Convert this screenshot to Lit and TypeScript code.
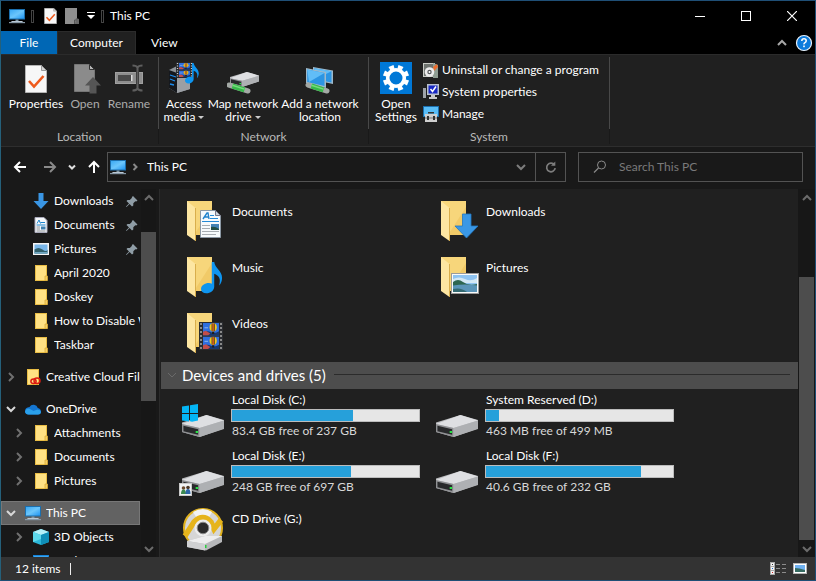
import { LitElement, html, svg, css, nothing } from "lit";
import type { TemplateResult } from "lit";
import { customElement, property } from "lit/decorators.js";
import { classMap } from "lit/directives/class-map.js";

type Icon = TemplateResult;

/* ---------- drawing helpers ---------- */

const draw = (w: number, h: number, body: unknown): Icon =>
  html`<svg class="art" width=${w} height=${h} viewBox="0 0 ${w} ${h}" aria-hidden="true">${body}</svg>`;

const chevron = (dir: "up" | "down" | "right", color: string, width = 2, reach = 4): Icon => {
  const r = reach;
  const points = {
    up: `${6 - r},${6 + r / 2} 6,${6 - r / 2} ${6 + r},${6 + r / 2}`,
    down: `${6 - r},${6 - r / 2} 6,${6 + r / 2} ${6 + r},${6 - r / 2}`,
    right: `${6 - r / 2},${6 - r} ${6 + r / 2},6 ${6 - r / 2},${6 + r}`,
  }[dir];
  return draw(12, 12, svg`<polyline points=${points} fill="none" stroke=${color} stroke-width=${width}/>`);
};

const pcIcon = draw(16, 16, svg`
  <defs><linearGradient id="pc" x2="1" y2="1"><stop stop-color="#3ba9f4"/><stop offset=".5" stop-color="#6cc6fb"/><stop offset="1" stop-color="#2196f3"/></linearGradient></defs>
  <rect x="0" y="1" width="16" height="10.5" fill="#1b6fae"/>
  <rect x="1" y="2" width="14" height="8.5" fill="url(#pc)"/>
  <path d="M6.500 11.500h3v1.500h-3z" fill="#7f97a8"/><path d="M3 13h10l1.500 1.200h-13z" fill="#b9c7d3"/><path d="M0 14h16v1.200h-16z" fill="#8798a6"/>`);

const sheet = (w: number, h: number): Icon => html`<svg class="art" width=${w} height=${h} viewBox="0 0 22 28" aria-hidden="true">
  <path d="M.5.5h16l5 5v22H.5z" fill="#f7f7f7" stroke="#b5b5b5"/><path d="M16.500.5v5h5z" fill="#d4d4d4" stroke="#999"/>
  <path d="M4 16l5 5.500 9.500-10.500" fill="none" stroke="#ee5a1c" stroke-width="2.600"/></svg>`;

const greySheet = draw(14, 16, svg`<path d="M0 0h12v11h2v5h-14z" fill="#8f8f8f"/><path d="M11 10l3 1v5h-4z" fill="#666"/><path d="M9.500 16v-4h2" fill="none" stroke="#555"/>`);

const openIcon = draw(32, 32, svg`
  <path d="M5.500 2.500h15l5 5v22h-20z" fill="#8b8b8b" stroke="#767676"/><path d="M20.500 2.500v5h5z" fill="#b5b5b5" stroke="#333"/>
  <path d="M24 15l8 8.500h-4.500v8h-7v-8H16z" fill="#555"/>`);

const renameIcon = draw(32, 32, svg`
  <rect x="2.500" y="10.500" width="27" height="11" fill="#8e8e8e" stroke="#a0a0a0"/>
  <rect x="5" y="13" width="13" height="6" fill="#4a4a4a"/><rect x="18" y="13" width="1.500" height="6" fill="#ddd"/>
  <path d="M23 8h3v16h-3z" fill="#202020"/><path d="M24.500 4v24M19.500 3.500q4 0 5 2q1-2 5-2M19.500 28.500q4 0 5-2q1 2 5 2" fill="none" stroke="#5e5e5e" stroke-width="2"/>`);

const note = (x: number, y: number, s: number) => svg`<g transform="translate(${x} ${y}) scale(${s})">
  <path d="M11 0h2.500c.5 6 8 9 8 16 0 3-1 6-3 8 2-7 0-10-5-12v13c0 4-4 7-8 7-3.500 0-5.500-2-5.500-4.500 0-3.500 4-6 8-6 1.200 0 2.200.2 3 .7z" fill="#0e95f0"/></g>`;

const filmFrame = svg`
  <rect width="22" height="13" fill="#2f6fe0"/><path d="M0 9.500q6-2 11 0t11-1v4.500h-22z" fill="#16386f"/>
  <path d="M0 9l4-1 6 3-3 2h-7z" fill="#c24d4a"/><path d="M2 5h5" stroke="#9cc4f5"/>
  <ellipse cx="14" cy="4.500" rx="5" ry="4.300" fill="#f4c81f"/>
  <path d="M12.500.5v8M15.500.5v8" stroke="#2b2416" stroke-width="1"/><path d="M14 .5v8" stroke="#d3301f" stroke-width="1.400"/><path d="M12.500 9h3v2.500h-3z" fill="#1b1b1b"/>`;

const accessIcon = draw(32, 32, svg`
  <path d="M1 8l8-4 13 2v21l-13 4-8-5z" fill="#8d9297"/><path d="M1 8l8 3v20l-8-5z" fill="#15181d"/><path d="M9 11l13-3v19l-13 4z" fill="#9b9fa4"/>
  <path d="M2 13l6 2M2 17l5 2M2 22l4 1" stroke="#1d8df0" stroke-width="1.300"/>
  <rect x="8" y="0" width="17" height="16" fill="#25282d"/>
  <svg x="11" y="1" width="11" height="6.500" viewBox="0 0 22 13">${filmFrame}</svg><svg x="11" y="8.500" width="11" height="6.500" viewBox="0 0 22 13">${filmFrame}</svg>
  <path d="M9.500 1v14M23.500 1v14" stroke="#c9c9c9" stroke-width="1.300" stroke-dasharray="1 1.500"/>
  ${note(17, 1, 0.64)}`);

const driveBody = svg`
  <path d="M0 7.500L25 0l18 5v8.500L18 22 0 17z" fill="#b9babd"/>
  <path d="M0 9L25 0l18 5.500L18 13z" fill="#dedfe2"/>
  <path d="M0 9l18 4v9L0 17z" fill="#8f9093"/><path d="M1.500 10.700l15 3.500v5.500l-15-3.500z" fill="#28292b"/>
  <rect x="14" y="16" width="2.500" height="2" fill="#29e045"/><path d="M18 13L43 5.500v8.500L18 22z" fill="#aeb0b3"/>`;

const pipe = svg`
  <path d="M2 0l19 6" stroke="#a3a9a5" stroke-width="5" stroke-linecap="round"/><path d="M5.500 1l12 3.900" stroke="#37b84a" stroke-width="5"/><path d="M5.500 .2l12 3.900" stroke="#74dd7c" stroke-width="1.500"/>`;

const mapIcon = draw(32, 32, svg`
  <svg x="3" y="10" width="29" height="15" viewBox="0 0 43 22" preserveAspectRatio="none">${driveBody}</svg><g transform="translate(0 23)">${pipe}</g>`);

const screen = svg`<path d="M0 0l20 4v16L0 15z" fill="#9fb9ca"/><path d="M1.200 1.500l17.300 3.600v13L1.200 14z" fill="#2c95e3"/><path d="M1.200 1.500l17.300 3.600L3 14z" fill="#61bdf7"/>`;
const addIcon = draw(32, 32, svg`
  <g transform="translate(9 5) scale(1 .85)">${screen}</g><g transform="translate(2 6)">${screen}</g><g transform="translate(2 23)">${pipe}</g>`);

const gearIcon = draw(32, 32, svg`
  <rect width="32" height="32" fill="#0078d7"/>
  <g fill="#fff">${[0, 45, 90, 135, 180, 225, 270, 315].map((a) => svg`<path d="M13.300 3h5.400l-.7 6h-4z" transform="rotate(${a + 22.5} 16 16)"/>`)}</g>
  <circle cx="16" cy="16" r="8.300" fill="none" stroke="#fff" stroke-width="3.600"/>`);

const uninstallIcon = draw(16, 16, svg`
  <rect x="0" y="1" width="12" height="14" fill="#c9ccc6"/><rect x="1" y="2" width="9" height="12" fill="#6e736f"/>
  <path d="M10 1l5 2v13h-5z" fill="#8f9d92"/><path d="M10 5l4-3 1 3-4 4z" fill="#ec6c2d"/>
  <circle cx="6.500" cy="10" r="4.800" fill="#ececec"/><circle cx="6.500" cy="10" r="2.200" fill="#55575a"/><circle cx="6.500" cy="10" r="1" fill="#fff"/>`);

const sysPropIcon = draw(16, 16, svg`
  <rect x="0" y="4" width="3" height="10" fill="#9fa3a8"/><rect x="4" y="0" width="12" height="11" fill="#b9c0cd"/><rect x="5.500" y="1.500" width="9" height="8" fill="#1828c4"/>
  <path d="M7.500 5l2 2.500 3.500-5" fill="none" stroke="#fff" stroke-width="1.500"/><path d="M8 11h4v2h2v2h-8v-2h2z" fill="#c9c9c9"/>`);

const manageIcon = draw(16, 16, svg`
  <rect x="0" y="0" width="16" height="11" fill="#1b6fae"/><rect x="1" y="1" width="14" height="9" fill="#59bdf7"/>
  <path d="M5 7.500h6v-1.500h-6z" fill="#333"/><rect x="2" y="8" width="12" height="8" fill="#cfcfcf"/><rect x="2" y="11.500" width="12" height="1" fill="#777"/>
  <rect x="4" y="10" width="2" height="4" fill="#333"/><rect x="10" y="10" width="2" height="4" fill="#333"/>`);

const helpIcon = draw(18, 18, svg`<circle cx="9" cy="9" r="7.500" fill="#0c7bdc" stroke="#e8f2fb" stroke-width="1.200"/>
  <path d="M6.800 7q0-2.200 2.200-2.200t2.200 2q0 1.200-1.200 1.800t-1 1.700" fill="none" stroke="#fff" stroke-width="1.500"/><rect x="8.200" y="11.500" width="1.600" height="1.700" fill="#fff"/>`);

const arrow = (dir: "left" | "right" | "up", color: string): Icon =>
  draw(14, 14, svg`<path d="M13 7H2M7 2L2 7l5 5" fill="none" stroke=${color} stroke-width="2" transform="rotate(${{ left: 0, right: 180, up: 90 }[dir]} 7 7)"/>`);

const refreshIcon = draw(14, 14, svg`<path d="M10.500 5A4.300 4.300 0 1 0 11.200 8.200" fill="none" stroke="#7d7d7d" stroke-width="1.700"/><path d="M11.300 1.500v4.300H7z" fill="#7d7d7d"/>`);

const downloadMini = draw(16, 16, svg`<path d="M5.500 0h5v8h5L8 16 .5 8h5z" fill="#3a96e4"/>`);
const docMini = draw(16, 16, svg`
  <path d="M2 .5h9l3 3v12H2z" fill="#f5f8fa" stroke="#aab"/><path d="M4 6.500L6 3l1.500 3.500M7.500 5.500h4.500M3.500 8h9" stroke="#1d86cf" fill="none"/>
  <path d="M3.500 10h3.500M3.500 12h3.500M3.500 14h9" stroke="#8a8f94"/><rect x="8" y="9.500" width="4.500" height="3" fill="#3e7fae"/>`);
const picMini = draw(16, 16, svg`
  <rect x="0" y="2" width="16" height="12" fill="#f4f4f4"/><rect x="1.500" y="3.500" width="13" height="9" fill="#79b7ea"/>
  <path d="M1.500 8.500q4-3 8 0t5 0v4h-13z" fill="#32606b"/><path d="M1.500 11h13v1.500h-13z" fill="#6fa7c2"/>`);
const folderMini = draw(16, 16, svg`
  <rect x="2" y="0" width="12" height="16" fill="#e9bd45"/><rect x="3" y="1" width="10" height="14" fill="#ffe184"/><path d="M12 11h2.500v4.600H12z" fill="#f6cf62" stroke="#d9a937" stroke-width=".8"/>`);
const ccMini = draw(16, 16, svg`
  <rect x="2" y="0" width="12" height="16" fill="#e9bd45"/><rect x="3" y="1" width="10" height="14" fill="#ffe184"/>
  <ellipse cx="8.500" cy="12.300" rx="2.600" ry="2.300" fill="none" stroke="#dd1b12" stroke-width="1.500"/><ellipse cx="12" cy="11.700" rx="3" ry="2.700" fill="none" stroke="#dd1b12" stroke-width="1.500"/>`);
const cloudMini = draw(16, 16, svg`
  <path d="M4.500 6a4.500 4.500 0 0 1 8.300 1q3 .7 3.200 3.500 0 3-3 3h-9.500q-3.500-.3-3.500-3.500 0-3.500 4.500-4z" fill="#1476d2"/>
  <path d="M0 10.500q1.500-4 5-2.500l3.500 2 4-1.500q3 .2 3.500 2.500-.3 2.500-3 2.500h-9.500q-3-.2-3.500-3z" fill="#2aa0ea"/>`);
const cubeMini = draw(16, 16, svg`
  <path d="M8 0l8 3v10l-8 3-8-3V3z" fill="#2bb7d9"/><path d="M8 0l8 3-8 3-8-3z" fill="#b4f0f8"/><path d="M8 6l8-3v10l-8 3z" fill="#0f8fb8"/><path d="M0 3l8 3v4L0 13z" fill="#5cd9ec"/>`);
const desktopMini = draw(16, 16, svg`<rect x="0" y="2" width="16" height="11" fill="#1683d8"/><rect x="1" y="3" width="14" height="9" fill="#3aa6f2"/>`);
const pinIcon = draw(12, 12, svg`<path d="M7 1l4.500 4.500-1.200 1-1-.3-2 2v2.300L6 11.500 3.600 9 .5 12 0 11.500l3-3.100L.5 6l1-1h2.300l2-2L6 2z" fill="#8f9da6"/>`);

const folderShape = svg`
  <path d="M8 4h25v34H8z" fill="#f1ca68"/><path d="M8 4h25v6L15 38h-7z" fill="#f7d67b"/>
  <path d="M8 4l8.500 7v33L8 38z" fill="#fde6a2"/><path d="M16.500 11v33" stroke="#d9ae4c"/>`;

const bigFolder = (badge: unknown): Icon => draw(48, 48, svg`${folderShape}${badge}`);

const docBadge = svg`
  <path d="M21.500 13.500h15l5 5v22h-20z" fill="#f7fafc" stroke="#8c98a4"/><path d="M36.500 13.500v5h5z" fill="#cfd6dc" stroke="#778"/>
  <path d="M24 22l4-6h1l1 6M25.500 20h4" fill="none" stroke="#2283cc" stroke-width="1.400"/>
  <path d="M31 18.500h4M31 21.500h8M23 24.500h17" stroke="#258ad6"/>
  <path d="M23 28.500h8M23 31.500h8M23 34.500h17M23 37.500h14" stroke="#a8adb2"/><rect x="32" y="27" width="8" height="6" fill="#4382b4"/><path d="M32 30q4-1 8 2v1h-8z" fill="#234f45"/>`;
const downBadge = svg`<path d="M29.500 17h8.500v12h7L33.500 41 22 29h7.500z" fill="#3a98e6" stroke="#2277c0" stroke-width=".8"/>`;
const picBadge = svg`
  <rect x="18.500" y="20.500" width="27" height="20" fill="#fafafa" stroke="#9b9b9b"/><rect x="20" y="22" width="24" height="17" fill="#8fc4f2"/>
  <path d="M20 26q6-3 12 0t12-1v5h-24z" fill="#d3e8f5"/><path d="M20 29q5-4 10 0t14 2v2h-24z" fill="#2f6650"/><path d="M20 32.500q12-2 24 0V39h-24z" fill="#5b95b8"/><path d="M20 36q8-2 14 3h-14z" fill="#346a72"/>`;
const videoBadge = svg`
  <rect x="20" y="13" width="24" height="28" fill="#2b2d31"/>
  <svg x="24" y="14" width="16" height="12.500" viewBox="0 0 22 13" preserveAspectRatio="none">${filmFrame}</svg><svg x="24" y="27.500" width="16" height="12.500" viewBox="0 0 22 13" preserveAspectRatio="none">${filmFrame}</svg>
  <path d="M22 14v27M42 14v27" stroke="#8a8a8a" stroke-width="2" stroke-dasharray="2 2"/>`;

const driveIcon = (extra: unknown = nothing): Icon =>
  draw(48, 48, svg`<svg x="3" y="23" width="42" height="22" viewBox="0 0 43 22" preserveAspectRatio="none">${driveBody}</svg>${extra}`);
const winFlag = svg`<path d="M3 14.500l7-1v7.500h-7zM11 13.300l8-1.300v9h-8zM3 22h7v7.500l-7-1zM11 22h8v6.500l-6 1.200-2-.5z" fill="#04b5f5"/>`;
const sharedBadge = svg`
  <rect x=".5" y="35.500" width="12" height="12" fill="#f1f3f4" stroke="#c9c9c9"/><circle cx="4.500" cy="40" r="1.800" fill="#6b4a2e"/><circle cx="9" cy="39.500" r="1.800" fill="#4d3826"/>
  <path d="M2 46q0-4.500 2.500-4.500T7 46z" fill="#3d8a50"/><path d="M6.500 46q0-5 2.500-5t2.500 5z" fill="#2d66a8"/>`;
const cdIcon = draw(48, 48, svg`
  <circle cx="24" cy="24" r="19" fill="#d6d6d6" stroke="#e0b11d" stroke-width="2"/>
  <path d="M24 24L14 8q10-6 19 0z" fill="#f3f3f3"/>
  <path d="M6 32L15 18Q24 9 32 18L35 25L42 16" fill="none" stroke="#e6b41b" stroke-width="5.500"/>
  <circle cx="24" cy="24" r="8.500" fill="#ececec"/><circle cx="24" cy="24" r="5.800" fill="#2b2b2b" stroke="#888"/>
  <path d="M8 37l18-5 17 0v6L27 46.500 8 43z" fill="#b7b8ba"/><path d="M8 37l18-5 17 0-17 8z" fill="#ededee"/><path d="M8 37l18 3v6.500L8 43z" fill="#cfd0d2"/><rect x="26" y="41" width="1.500" height="3" fill="#28d03f"/>`);

const detailsIcon = draw(18, 14, svg`
  <rect x=".5" y=".5" width="4" height="12" fill="#f2f2f2" stroke="#aaa"/><path d="M0 4.500h5M0 8.500h5" stroke="#aaa"/>
  <rect x="2" y="2" width="1" height="1" fill="#333"/><rect x="2" y="6" width="1" height="1" fill="#1b6fd0"/><rect x="2" y="10" width="1" height="1" fill="#c22"/>
  <path d="M6 2.500h4M12 2.500h4M6 6.500h4M12 6.500h4M6 10.500h4M12 10.500h4" stroke="#8c8c8c"/>`);
const tilesIcon = draw(14, 12, svg`
  <rect x=".5" y=".5" width="13" height="10" fill="#fff" stroke="#b5b5b5"/><rect x="2" y="2" width="10" height="7" fill="#6fb1f2"/><path d="M2 5q4 0 10 2v2h-10z" fill="#366b62"/>`);

/* ---------- shared styles ---------- */

const base = css`
  * { box-sizing: border-box; }
  button { all: unset; box-sizing: border-box; cursor: default; }
  ul { list-style: none; margin: 0; padding: 0; }
  .art { display: block; flex: none; }
`;

/* ---------- navigation tree ---------- */

interface NavNode { text: string; icon: Icon; level: 1 | 2; arrow?: "right" | "down"; pin?: boolean; gap?: boolean; selected?: boolean; }

const navNodes: NavNode[] = [
  { text: "Downloads", icon: downloadMini, level: 2, pin: true },
  { text: "Documents", icon: docMini, level: 2, pin: true },
  { text: "Pictures", icon: picMini, level: 2, pin: true },
  { text: "April 2020", icon: folderMini, level: 2 },
  { text: "Doskey", icon: folderMini, level: 2 },
  { text: "How to Disable Windows", icon: folderMini, level: 2 },
  { text: "Taskbar", icon: folderMini, level: 2 },
  { text: "Creative Cloud Files", icon: ccMini, level: 1, arrow: "right", gap: true },
  { text: "OneDrive", icon: cloudMini, level: 1, arrow: "down", gap: true },
  { text: "Attachments", icon: folderMini, level: 2, arrow: "right" },
  { text: "Documents", icon: folderMini, level: 2, arrow: "right" },
  { text: "Pictures", icon: folderMini, level: 2, arrow: "right" },
  { text: "This PC", icon: pcIcon, level: 1, arrow: "down", gap: true, selected: true },
  { text: "3D Objects", icon: cubeMini, level: 2, arrow: "right" },
  { text: "Desktop", icon: desktopMini, level: 2 },
];

@customElement("nav-tree")
export class NavTree extends LitElement {
  static styles = [base, css`
    :host { display: block; overflow: hidden; padding-right: 1px; }
    .row { display: flex; align-items: center; width: 100%; height: 24px; padding-left: 4px; white-space: nowrap; overflow: hidden; }
    .row.two { padding-left: 12px; }
    .row.selected { background: #626262; box-shadow: inset 0 0 0 1px #777; }
    .gap { margin-top: 8px; }
    .twist { flex: none; width: 12px; margin-right: 8px; }
    .icon { flex: none; width: 16px; margin-right: 5px; }
    .text { flex: 1; min-width: 0; overflow: hidden; }
    .pin { flex: none; margin-right: 2px; }
  `];

  render() {
    return html`<ul>${navNodes.map((n) => html`
      <li class=${classMap({ gap: !!n.gap })}>
        <button class=${classMap({ row: true, two: n.level === 2, selected: !!n.selected })}>
          <span class="twist">${n.arrow ? chevron(n.arrow, n.arrow === "down" ? "#d8d8d8" : "#707070") : nothing}</span>
          <span class="icon">${n.icon}</span>
          <span class="text">${n.text}</span>
          ${n.pin ? html`<span class="pin">${pinIcon}</span>` : nothing}
        </button>
      </li>`)}</ul>`;
  }
}

/* ---------- scroll bar ---------- */

@customElement("scroll-rail")
export class ScrollRail extends LitElement {
  @property({ type: Number }) before = 0;
  @property({ type: Number }) thumb = 0;
  @property({ type: Number }) after = 0;
  static styles = [base, css`
    :host { display: flex; flex-direction: column; align-items: stretch; background: #171717; }
    button { display: grid; place-items: center; height: 17px; flex: none; }
    .thumb { background: #4d4d4d; }
  `];
  render() {
    return html`
      <button aria-label="Scroll up">${chevron("up", "#6b6b6b")}</button>
      <div style="flex:${this.before} 0 0"></div>
      <div class="thumb" style="flex:${this.thumb} 0 0"></div>
      <div style="flex:${this.after} 0 0"></div>
      <button aria-label="Scroll down">${chevron("down", "#6b6b6b")}</button>`;
  }
}

/* ---------- ribbon ---------- */

interface BigCmd { lines: string[]; icon: Icon; size: string; drop?: boolean; off?: boolean; }

@customElement("ribbon-bar")
export class RibbonBar extends LitElement {
  static styles = [base, css`
    :host { display: flex; padding: 2px 0 2px; background: #202020; border-top: 1px solid #2b2b2b; border-bottom: 1px solid #2e2e2e; color: #fff; }
    .group { display: flex; flex-direction: column; }
    .cmds { display: flex; height: 72px; padding: 5px 6px 0 1px; border-right: 1px solid #484848; }
    .first .cmds { padding: 5px 6px 0 7px; }
    .last { min-width: 241px; }
    .last .cmds { padding: 5px 9px 0 3px; }
    .name { height: 15px; line-height: 15px; text-align: center; color: #b8b8b8; border-right: 1px solid #191919; }
    .big { display: flex; flex-direction: column; align-items: center; line-height: 13px; white-space: nowrap; }
    .big .label { margin-top: 3px; text-align: center; display: block; }
    .line { display: block; }
    .off { color: #acacac; }
    .s { width: 42px; } .r { width: 46px; } .m { width: 48px; } .l { width: 56px; } .xl { width: 70px; } .xxl { width: 84px; }
    .caret { display: inline-block; border: 3px solid transparent; border-top-color: #ccc; border-bottom: 0; vertical-align: 2px; margin-left: 3px; }
    .list { display: flex; flex-direction: column; gap: 6px; padding-left: 3px; }
    .small { display: flex; align-items: center; gap: 3px; height: 16px; white-space: nowrap; }
    .sheet { display: grid; place-items: center; height: 32px; padding-top: 2px; }
  `];

  private big(c: BigCmd) {
    const last = c.lines.length - 1;
    return html`<button class="big ${c.size} ${c.off ? "off" : ""}" ?disabled=${!!c.off}>
      ${c.icon}
      <span class="label">${c.lines.map((t, i) => html`<span class="line">${t}${c.drop && i === last ? html`<span class="caret"></span>` : nothing}</span>`)}</span>
    </button>`;
  }

  render() {
    return html`
      <div class="group first">
        <div class="cmds">
          ${this.big({ lines: ["Properties"], size: "l", icon: html`<span class="sheet">${sheet(22, 28)}</span>` })}
          ${this.big({ lines: ["Open"], size: "s", icon: openIcon, off: true })}
          ${this.big({ lines: ["Rename"], size: "r", icon: renameIcon, off: true })}
        </div>
        <div class="name">Location</div>
      </div>
      <div class="group">
        <div class="cmds">
          ${this.big({ lines: ["Access", "media"], size: "m", icon: accessIcon, drop: true })}
          ${this.big({ lines: ["Map network", "drive"], size: "xl", icon: mapIcon, drop: true })}
          ${this.big({ lines: ["Add a network", "location"], size: "xxl", icon: addIcon })}
        </div>
        <div class="name">Network</div>
      </div>
      <div class="group last">
        <div class="cmds">
          ${this.big({ lines: ["Open", "Settings"], size: "m", icon: gearIcon })}
          <div class="list">
            <button class="small">${uninstallIcon}Uninstall or change a program</button>
            <button class="small">${sysPropIcon}System properties</button>
            <button class="small">${manageIcon}Manage</button>
          </div>
        </div>
        <div class="name">System</div>
      </div>`;
  }
}

/* ---------- folder and drive tiles ---------- */

interface Drive { name: string; icon: Icon; used?: number; free?: string; }

const folders: { name: string; icon: Icon }[] = [
  { name: "Documents", icon: bigFolder(docBadge) },
  { name: "Downloads", icon: bigFolder(downBadge) },
  { name: "Music", icon: bigFolder(note(22, 9, 0.98)) },
  { name: "Pictures", icon: bigFolder(picBadge) },
  { name: "Videos", icon: bigFolder(videoBadge) },
];

const drives: Drive[] = [
  { name: "Local Disk (C:)", icon: driveIcon(winFlag), used: 64.8, free: "83.4 GB free of 237 GB" },
  { name: "System Reserved (D:)", icon: driveIcon(), used: 7.2, free: "463 MB free of 499 MB" },
  { name: "Local Disk (E:)", icon: driveIcon(sharedBadge), used: 63.6, free: "248 GB free of 697 GB" },
  { name: "Local Disk (F:)", icon: driveIcon(), used: 83, free: "40.6 GB free of 232 GB" },
  { name: "CD Drive (G:)", icon: cdIcon },
];

@customElement("file-view")
export class FileView extends LitElement {
  static styles = [base, css`
    :host { display: block; overflow: hidden; background: #202020; color: #fff; padding: 8px 0 0 1px; }
    .tiles { display: grid; grid-template-columns: repeat(2, 254px); grid-auto-rows: 48px; row-gap: 8px; padding-left: 18px; }
    .tile { display: grid; grid-template-columns: 48px 189px; column-gap: 4px; height: 48px; white-space: nowrap; }
    .info { display: flex; flex-direction: column; }
    .single { padding-top: 7px; }
    .name, .free { line-height: 16px; padding-left: 1px; }
    .free { color: #d8d8d8; }
    .used { appearance: none; display: block; width: 100%; height: 13px; margin: 1px 0; border: 1px solid #bcbcbc; background: #e6e6e6; }
    .used::-webkit-progress-bar { background: #e6e6e6; }
    .used::-webkit-progress-value { background: #26a0da; }
    .head { display: flex; align-items: center; height: 27px; margin: 5px 0 3px; padding: 0 8px 2px 5px; background: #4d4d4d; font-size: 15px; }
    .head .title { margin: 0 8px 0 4px; font: inherit; white-space: nowrap; }
    .rule { flex: 1; height: 1px; background: #2b2b2b; }
  `];

  render() {
    return html`
      <div class="tiles">${folders.map((f) => html`
        <button class="tile">${f.icon}<span class="info single"><span class="name">${f.name}</span></span></button>`)}</div>
      <div class="head">${chevron("down", "#6a6a6a", 1)}<h2 class="title">Devices and drives (5)</h2><span class="rule"></span></div>
      <div class="tiles">${drives.map((d) => html`
        <button class="tile">${d.icon}
          <span class="info ${d.free ? "" : "single"}">
            <span class="name">${d.name}</span>
            ${d.free ? html`<progress class="used" max="100" .value=${d.used ?? 0} aria-label="Space used on ${d.name}"></progress><span class="free">${d.free}</span>` : nothing}
          </span>
        </button>`)}</div>`;
  }
}

/* ---------- window ---------- */

@customElement("app-root")
export class AppRoot extends LitElement {
  static styles = [base, css`
    :host { display: flex; flex-direction: column; height: 100vh; overflow: hidden; box-sizing: border-box; background: #191919; color: #fff; font: 12px/16px Lato, "Open Sans", sans-serif; border: 1px solid #1f4f76; border-left-color: #25607a; }
    .title { display: flex; align-items: center; height: 30px; padding-left: 8px; background: #000; flex: none; }
    .bar { width: 3px; height: 13px; border: 1px solid #444; }
    .quick { display: flex; align-items: center; margin-right: 6px; }
    .quick .bar { margin-left: 6px; }
    .quick .bar + button { margin-left: 10px; }
    .quick button + button { margin-left: 8px; }
    .caption { flex: 1; }
    .win { display: grid; place-items: center; width: 46px; height: 30px; }
    .tabs { display: flex; align-items: stretch; height: 23px; background: #000; flex: none; }
    .tab { display: grid; place-items: center; padding: 0 15px; }
    .file { background: #0067b5; width: 56px; padding: 0; }
    .open { background: #202020; width: 79px; padding: 0; border: 1px solid #2b2b2b; border-bottom: 0; }
    .right { margin-left: auto; display: flex; align-items: center; gap: 7px; padding-right: 2px; }
    ribbon-bar { flex: none; }
    .address { display: grid; grid-template-columns: 94px minmax(0, 31fr) minmax(0, 16fr); align-items: center; height: 42px; padding: 0 12px 2px; flex: none; }
    .move { display: flex; align-items: center; gap: 7px; }
    .forward { margin-left: 9px; }
    .recent { display: grid; place-items: center; width: 16px; }
    .path { display: flex; align-items: center; height: 30px; border: 1px solid #535353; padding-left: 2px; }
    .path .crumb { flex: 1; margin-left: 6px; }
    .path .step { margin-left: 3px; }
    .drop { margin-right: 8px; }
    .fresh { display: grid; place-items: center; width: 30px; height: 28px; border-left: 1px solid #535353; }
    .search { display: flex; align-items: center; gap: 12px; height: 30px; margin-left: 12px; padding-left: 14px; border: 1px solid #535353; }
    .search input { flex: 1; min-width: 0; padding: 0; border: 0; outline: 0; background: none; color: #fff; font: inherit; }
    .search input::placeholder { color: #7a7a7a; opacity: 1; }
    .main { flex: 1; min-height: 0; display: grid; grid-template-columns: 140px 15px 4px 1fr 17px; }
    .edge { padding: 0 1px; }
    .split { border-right: 1px solid #2b2b2b; }
    .status { display: flex; align-items: center; height: 23px; padding: 0 8px 0 14px; background: #333; flex: none; }
    .mark { width: 1px; height: 12px; margin-left: 9px; background: #eee; }
    .views { margin-left: auto; display: flex; align-items: center; gap: 5px; }
  `];

  render() {
    return html`
      <header class="title">
        <div class="quick">
          <button aria-label="Window menu">${pcIcon}</button><span class="bar"></span>
          <button aria-label="Properties">${sheet(13, 16)}</button>
          <button aria-label="New folder">${greySheet}</button>
          <button aria-label="Customize toolbar">${draw(8, 8, svg`<path d="M0 .5h8" stroke="#fff"/><path d="M0 3h8L4 7z" fill="#fff"/>`)}</button>
          <span class="bar"></span>
        </div>
        <span class="caption">This PC</span>
        <button class="win" aria-label="Minimize">${draw(10, 10, svg`<path d="M0 5.500h10" stroke="#fff"/>`)}</button>
        <button class="win" aria-label="Maximize">${draw(10, 10, svg`<rect x=".5" y=".5" width="9" height="9" fill="none" stroke="#fff"/>`)}</button>
        <button class="win" aria-label="Close">${draw(10, 10, svg`<path d="M0 0l10 10M10 0L0 10" stroke="#fff" stroke-width="1.200"/>`)}</button>
      </header>
      <div class="tabs">
        <button class="tab file">File</button>
        <button class="tab open">Computer</button>
        <button class="tab">View</button>
        <div class="right">
          <button aria-label="Collapse the ribbon">${chevron("up", "#a8a8a8")}</button>
          <button aria-label="Help">${helpIcon}</button>
        </div>
      </div>
      <ribbon-bar></ribbon-bar>
      <div class="address">
        <div class="move">
          <button aria-label="Back">${arrow("left", "#fff")}</button>
          <button class="forward" aria-label="Forward">${arrow("right", "#8a8a8a")}</button>
          <button class="recent" aria-label="Recent locations">${chevron("down", "#e0e0e0", 2, 3)}</button>
          <button aria-label="Up">${arrow("up", "#fff")}</button>
        </div>
        <div class="path">
          ${pcIcon}<span class="step">${chevron("right", "#8a8a8a", 2, 3)}</span>
          <span class="crumb">This PC</span>
          <button class="drop" aria-label="Previous locations">${chevron("down", "#7d7d7d")}</button>
          <button class="fresh" aria-label="Refresh">${refreshIcon}</button>
        </div>
        <label class="search">
          ${draw(14, 14, svg`<circle cx="8.500" cy="5" r="4" fill="none" stroke="#8a8a8a"/><path d="M5.500 8L1 12.500" stroke="#8a8a8a" stroke-width="1.200"/>`)}
          <input type="search" placeholder="Search This PC" aria-label="Search This PC">
        </label>
      </div>
      <main class="main">
        <nav-tree></nav-tree>
        <scroll-rail before="26" thumb="169" after="139"></scroll-rail>
        <div class="split"></div>
        <file-view></file-view>
        <scroll-rail class="edge" before="71" thumb="263" after="0"></scroll-rail>
      </main>
      <footer class="status">
        <span>12 items</span><span class="mark"></span>
        <div class="views"><button aria-label="Details view">${detailsIcon}</button><button aria-label="Large icons view">${tilesIcon}</button></div>
      </footer>`;
  }
}
